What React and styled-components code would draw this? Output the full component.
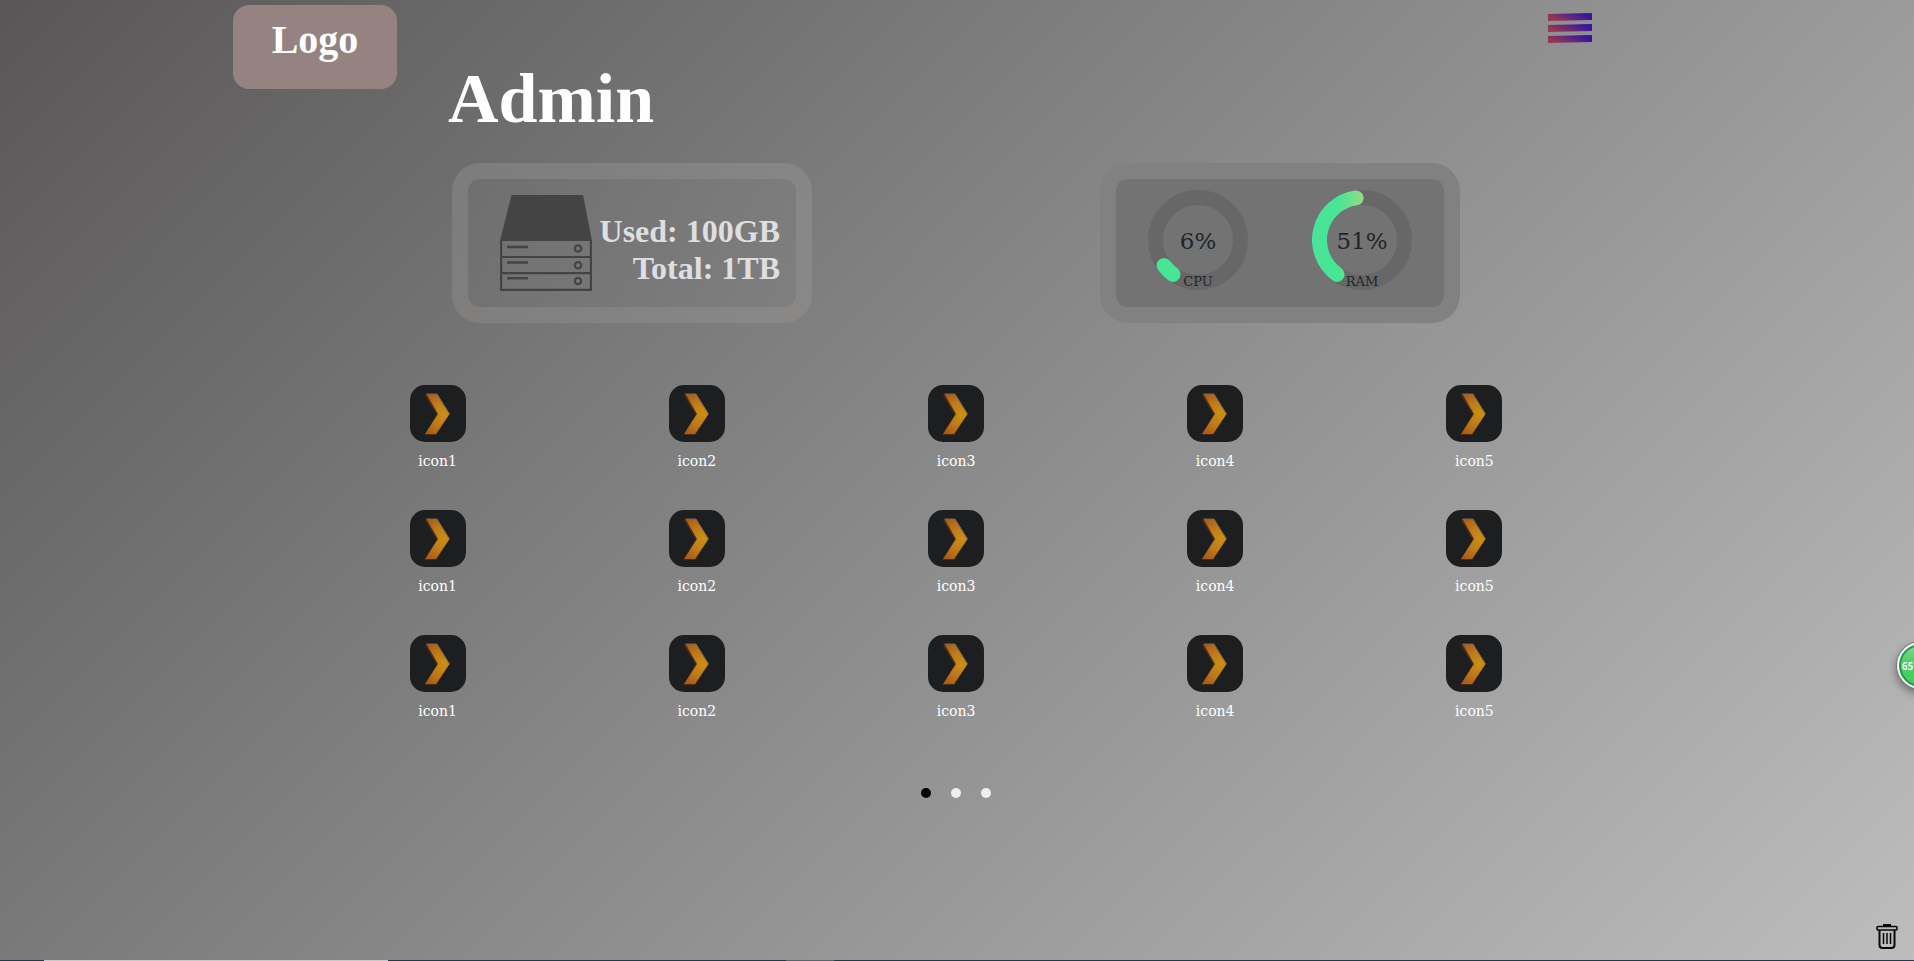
import React from "react";
import styled, { createGlobalStyle } from "styled-components";

const GlobalStyle = createGlobalStyle`
  *, *::before, *::after { box-sizing: border-box; }
  body { margin: 0; font-family: "Liberation Serif", "Times New Roman", serif; }
  button { font: inherit; color: inherit; border: 0; padding: 0; background: none; cursor: pointer; }
  svg { flex: none; }
`;

const labelFont = `"DejaVu Serif", Cambria, serif`;

const Page = styled.div`
  display: flex;
  flex-direction: column;
  min-height: 100vh;
  overflow: hidden;
  background: linear-gradient(135deg, #595657 0%, #797979 33%, #bdbdbd 100%);
`;

const Header = styled.header`
  display: flex;
  justify-content: space-between;
  align-items: flex-start;
  height: 64px;
  padding: 5px 322px 0 233px;
`;

const Logo = styled.a`
  flex: none;
  width: 164px;
  height: 84px;
  padding-top: 12px;
  border-radius: 16px;
  background: #958382;
  color: #fff;
  font-size: 40px;
  font-weight: 700;
  line-height: 46px;
  text-align: center;
  text-decoration: none;
`;

const MenuButton = styled.button`
  display: flex;
  margin-top: 8px;
`;

const Main = styled.main`
  flex: 1;
  display: flex;
  flex-direction: column;
  margin: 0 310px 0 308px;
`;

const Title = styled.h1`
  margin: 0;
  padding-left: 140px;
  color: #fff;
  font-size: 70px;
  line-height: 70px;
`;

const Cards = styled.section`
  display: grid;
  grid-template-columns: 1fr 1fr;
  justify-items: center;
  margin-top: 29px;
`;

const Card = styled.div`
  display: flex;
  width: 360px;
  height: 160px;
  padding: 16px;
  border-radius: 28px;
  background: ${(p) => p.$ring};
`;

const CardBody = styled.div`
  flex: 1;
  display: flex;
  align-items: center;
  border-radius: 12px;
  background: ${(p) => p.$fill};
`;

const DiskBody = styled(CardBody)`
  justify-content: space-between;
  padding: 0 16px 0 32px;
`;

const DiskText = styled.div`
  margin-top: 14px;
  color: #dfdfe1;
  font-size: 32px;
  font-weight: 700;
  line-height: 37px;
  text-align: right;
  white-space: nowrap;
`;

const GaugeBox = styled.div`
  flex: 1;
  display: flex;
  justify-content: center;
  margin-top: -6px;
`;

const GaugeText = styled.text`
  font-family: ${labelFont};
  font-size: ${(p) => p.$size}px;
  fill: #212529;
  text-anchor: middle;
`;

const IconGrid = styled.section`
  display: grid;
  grid-template-columns: repeat(5, 1fr);
  row-gap: 38px;
  margin-top: 62px;
`;

const AppLink = styled.a`
  display: flex;
  flex-direction: column;
  align-items: center;
  gap: 8px;
  color: #fff;
  font-family: ${labelFont};
  font-size: 14px;
  line-height: 22px;
  text-decoration: none;
`;

const Dots = styled.nav`
  display: flex;
  justify-content: center;
  gap: 20px;
  margin-top: 66px;
`;

const Dot = styled.button`
  width: 10px;
  height: 10px;
  border-radius: 50%;
  background: ${(p) => (p.$active ? "#000" : "#efefef")};
`;

const TrashButton = styled.button`
  position: fixed;
  right: 16px;
  bottom: 12px;
  display: flex;
`;

const Bubble = styled.button`
  && {
    position: fixed;
    right: -30px;
    top: 642px;
    width: 47px;
    height: 47px;
    padding-left: 3px;
    border: 2px solid #f5f5f5;
    border-radius: 50%;
    background: linear-gradient(#7fdc86 0, #4cc963 50%, #45d35c 100%);
    box-shadow: inset 0 0 0 2px #1d9a4c, 0 0 0 1px #777, -1px 4px 8px rgba(0, 0, 0, 0.4);
    color: #fff;
    font-family: "Noto Sans", sans-serif;
    font-size: 10px;
    font-weight: 700;
    text-align: left;
  }
`;

const BottomStrip = styled.div`
  position: fixed;
  left: 0;
  right: 0;
  bottom: 0;
  height: 1px;
  background: linear-gradient(
    90deg,
    #223a4c 44px,
    #ccc6c6 44px 388px,
    #223a4c 388px 786px,
    #566570 786px 834px,
    #223a4c 834px
  );
`;

function MenuIcon() {
  return (
    <svg width="44" height="30" viewBox="0 0 44 30" aria-hidden="true">
      <defs>
        <linearGradient id="bar" x1="0" x2="1" y1="0.4" y2="0">
          <stop offset="0" stopColor="#963650" />
          <stop offset="0.55" stopColor="#50228a" />
          <stop offset="0.8" stopColor="#36159a" />
          <stop offset="1" stopColor="#3b1796" />
        </linearGradient>
      </defs>
      {[0, 11, 22].map((y) => (
        <path key={y} d={`M0 ${y + 1}L44 ${y}V${y + 7}L0 ${y + 8}Z`} fill="url(#bar)" />
      ))}
    </svg>
  );
}

function ServerIcon() {
  return (
    <svg width="92" height="96" viewBox="0 0 92 96" aria-hidden="true">
      <path d="M11.500 0H83L92 46H0Z" fill="#444" />
      <g fill="none" stroke="#444" strokeWidth="2.200">
        <path d="M1.100 45V94.900H90.900V45M1 62H91M1 78.200H91" />
        <path d="M7 52H28M7 67.500H28M7 83.300H28" strokeWidth="2.600" />
        <circle cx="78" cy="53.500" r="3.200" />
        <circle cx="78" cy="70.300" r="3.200" />
        <circle cx="78" cy="86" r="3.200" />
      </g>
    </svg>
  );
}

const RADIUS = 42.5;
const pointAt = (degrees) => {
  const a = (degrees * Math.PI) / 180;
  return `${50 - RADIUS * Math.sin(a)} ${50 + RADIUS * Math.cos(a)}`;
};

function Gauge({ name, value, sweep }) {
  const id = `gauge-${name}`;
  return (
    <GaugeBox>
      <svg width="100" height="100" viewBox="0 0 100 100" role="img" aria-label={`${name} ${value}%`}>
        <defs>
          <linearGradient id={id} gradientUnits="userSpaceOnUse" x1="26" x2="54" y1="0" y2="0">
            <stop offset="0" stopColor="#48e597" />
            <stop offset="1" stopColor={value > 50 ? "#9bdb80" : "#48e597"} />
          </linearGradient>
        </defs>
        <circle cx="50" cy="50" r={RADIUS} fill="none" stroke="#000" strokeOpacity="0.1" strokeWidth="15" />
        <path
          d={`M${pointAt(36)}A${RADIUS} ${RADIUS} 0 0 1 ${pointAt(36 + sweep)}`}
          fill="none"
          stroke={`url(#${id})`}
          strokeWidth="15"
          strokeLinecap="round"
        />
        <GaugeText x="50" y="59" $size={23}>{value}%</GaugeText>
        <GaugeText x="50" y="96" $size={13}>{name}</GaugeText>
      </svg>
    </GaugeBox>
  );
}

function AppIcon() {
  return (
    <svg width="56" height="57" viewBox="0 0 56 57" aria-hidden="true">
      <defs>
        <radialGradient id="chevron" gradientUnits="userSpaceOnUse" cx="34" cy="29" r="25">
          <stop offset="0" stopColor="#cb9014" />
          <stop offset="0.5" stopColor="#be7b1a" />
          <stop offset="1" stopColor="#a95a19" />
        </radialGradient>
      </defs>
      <rect width="56" height="57" rx="15" fill="#1c1e1f" />
      <path d="M14.500 9.500H26.500L39.500 29.500L26.500 50H14.500L26.500 29.500Z" fill="#4b2d16" />
      <path d="M16.500 9H27L39.500 29L26 49H15L28 29Z" fill="url(#chevron)" />
      <path d="M16.500 9H27L39.500 29" fill="none" stroke="#7b6754" />
    </svg>
  );
}

function TrashIcon() {
  return (
    <svg width="22" height="25" viewBox="0 0 22 25" fill="none" stroke="#080808" aria-hidden="true">
      <path d="M8 2V1H14V2" strokeWidth="2" />
      <rect x="1" y="2.500" width="20" height="3.500" rx="1" strokeWidth="1.600" />
      <path d="M3.500 6V21Q3.500 24 6.500 24H15.500Q18.500 24 18.500 21V6" strokeWidth="2" />
      <path d="M7.500 9V20M11 9V20M14.500 9V20" strokeWidth="1.500" />
    </svg>
  );
}

const ROWS = [0, 1, 2];
const APPS = ["icon1", "icon2", "icon3", "icon4", "icon5"];

export default function App() {
  return (
    <Page>
      <GlobalStyle />
      <Header>
        <Logo href="#">Logo</Logo>
        <MenuButton aria-label="Menu">
          <MenuIcon />
        </MenuButton>
      </Header>
      <Main>
        <Title>Admin</Title>
        <Cards>
          <Card $ring="linear-gradient(120deg, #7e7b7b, #8b8888)">
            <DiskBody $fill="linear-gradient(120deg, #706f6f, #7f7f7f)">
              <ServerIcon />
              <DiskText>
                <div>Used: 100GB</div>
                <div>Total: 1TB</div>
              </DiskText>
            </DiskBody>
          </Card>
          <Card $ring="#818181">
            <CardBody $fill="#737373">
              <Gauge name="CPU" value={6} sweep={17} />
              <Gauge name="RAM" value={51} sweep={136} />
            </CardBody>
          </Card>
        </Cards>
        <IconGrid>
          {ROWS.map((row) =>
            APPS.map((name) => (
              <AppLink href="#" key={`${row}-${name}`}>
                <AppIcon />
                {name}
              </AppLink>
            ))
          )}
        </IconGrid>
        <Dots aria-label="Pages">
          <Dot $active aria-label="Page 1" />
          <Dot aria-label="Page 2" />
          <Dot aria-label="Page 3" />
        </Dots>
      </Main>
      <TrashButton aria-label="Trash">
        <TrashIcon />
      </TrashButton>
      <Bubble>65</Bubble>
      <BottomStrip />
    </Page>
  );
}
